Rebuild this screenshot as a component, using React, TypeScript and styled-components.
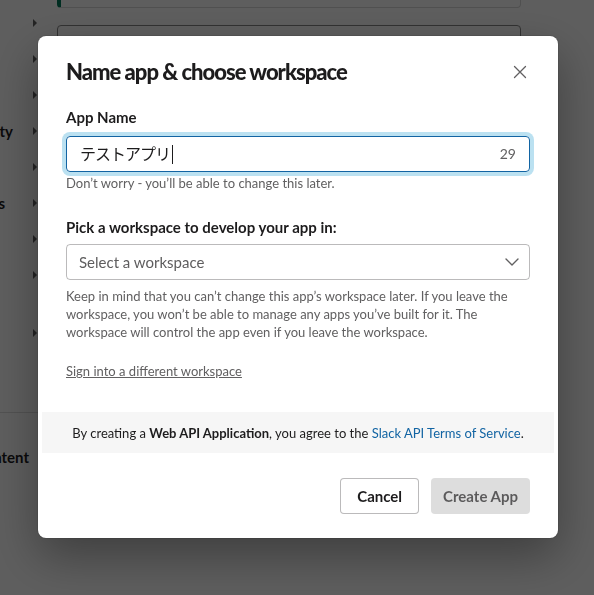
import React from "react";
import styled, { createGlobalStyle } from "styled-components";

const GlobalStyle = createGlobalStyle`
  html, body { margin: 0; padding: 0; }
  body {
    background: #ffffff;
    font-family: Lato, "Noto Sans CJK JP", sans-serif;
    overflow: hidden;
    color: #1d1c1d;
  }
  * { box-sizing: border-box; }
`;

const Page = styled.div`
  display: flex;
  width: 594px;
  height: 595px;
  overflow: hidden;
`;

const Sidebar = styled.nav`
  width: 44px;
  flex-shrink: 0;
  padding-top: 5px;
  display: flex;
  flex-direction: column;
  overflow: hidden;
`;

const NavRow = styled.div<{ $top?: number }>`
  height: 36px;
  flex-shrink: 0;
  display: flex;
  align-items: center;
  justify-content: flex-end;
  padding-right: 7px;
  margin-top: ${(p) => p.$top ?? 0}px;
`;

const NavLabel = styled.span<{ $gap: number }>`
  white-space: nowrap;
  font: 700 15px/22px Lato, sans-serif;
  color: #1d1c1d;
  margin-right: ${(p) => p.$gap}px;
`;

const Arrow = styled.span`
  width: 0;
  height: 0;
  border-top: 4px solid transparent;
  border-bottom: 4px solid transparent;
  border-left: 4px solid #616061;
`;

const Divider = styled.hr`
  width: 100%;
  margin: 61px 0 0;
  border: none;
  border-top: 1px solid #dddddd;
`;

const Content = styled.main`
  margin-left: 13px;
  width: 464px;
  display: flex;
  flex-direction: column;
`;

const TopCard = styled.div`
  height: 8px;
  border: 1px solid #d8d8d8;
  border-top: none;
  border-left: 4px solid #007a5a;
  border-radius: 0 0 4px 4px;
`;

const SearchBox = styled.div`
  margin-top: 17px;
  height: 120px;
  border: 1px solid #888888;
  border-radius: 4px;
`;

const Overlay = styled.div`
  position: fixed;
  inset: 0;
  background: rgba(0, 0, 0, 0.63);
  display: flex;
  align-items: flex-start;
  padding: 36px 0 0 38px;
`;

const Modal = styled.div`
  width: 520px;
  background: #ffffff;
  border-radius: 8px;
  box-shadow: 0 0 0 1px rgba(29, 28, 29, 0.13), 0 18px 48px 0 rgba(0, 0, 0, 0.35);
  display: flex;
  flex-direction: column;
`;

const Header = styled.header`
  display: flex;
  align-items: center;
  justify-content: space-between;
  padding: 22px 20px 0 28px;
  height: 50px;
`;

const Title = styled.h1`
  margin: 0;
  font: 900 22px/28px Lato, sans-serif;
  color: #1d1c1d;
  letter-spacing: -1px;
`;

const CloseButton = styled.button`
  width: 36px;
  height: 36px;
  margin: -4px 0;
  border: none;
  background: transparent;
  display: flex;
  align-items: center;
  justify-content: center;
  padding: 0;
  color: #616061;
`;

const Body = styled.div`
  padding: 20px 28px 32px;
  display: flex;
  flex-direction: column;
`;

const Label = styled.label<{ $top?: number; $bottom: number }>`
  font: 700 15px/22px Lato, sans-serif;
  color: #1d1c1d;
  margin-top: ${(p) => p.$top ?? 0}px;
  margin-bottom: ${(p) => p.$bottom}px;
`;

const TextField = styled.div`
  height: 36px;
  border: 1px solid #1264a3;
  border-radius: 4px;
  box-shadow: 0 0 0 4px rgba(29, 155, 209, 0.3);
  display: flex;
  align-items: center;
  padding: 0 13px;
`;

const FieldValue = styled.span`
  font: 400 16px/22px Lato, "Noto Sans CJK JP", sans-serif;
  letter-spacing: -1px;
  color: #1d1c1d;
`;

const Caret = styled.span`
  width: 1px;
  height: 19px;
  background: #1d1c1d;
  margin-left: 2px;
`;

const Counter = styled.span`
  margin-left: auto;
  font: 400 14px/22px Lato, sans-serif;
  color: #616061;
`;

const Hint = styled.p<{ $top: number }>`
  margin: ${(p) => p.$top}px 0 0;
  font: 400 13px/18px Lato, sans-serif;
  color: #616061;
`;

const Select = styled.div`
  height: 36px;
  border: 1px solid rgba(29, 28, 29, 0.3);
  border-radius: 4px;
  display: flex;
  align-items: center;
  justify-content: space-between;
  padding: 0 10px 0 12px;
`;

const Placeholder = styled.span`
  font: 400 15px/22px Lato, sans-serif;
  color: #5e5d5e;
`;

const SignLink = styled.a`
  margin-top: 21px;
  align-self: flex-start;
  font: 400 13px/18px Lato, sans-serif;
  color: #616061;
  text-decoration: underline;
`;

const Notice = styled.div`
  margin: 0 4px;
  height: 41px;
  padding-top: 12px;
  background: #f6f6f6;
  text-align: center;
  font: 400 13px/18px Lato, sans-serif;
  color: #1d1c1d;
`;

const Strong = styled.b`
  font-weight: 700;
`;

const TermsLink = styled.a`
  color: #1264a3;
  text-decoration: none;
`;

const Footer = styled.footer`
  display: flex;
  justify-content: flex-end;
  gap: 12px;
  padding: 25px 28px 24px;
`;

const Button = styled.button<{ $primary?: boolean }>`
  height: 36px;
  padding: ${(p) => (p.$primary ? "0 12px" : "0 16px")};
  border-radius: 4px;
  font: 700 15px/22px Lato, sans-serif;
  border: ${(p) => (p.$primary ? "none" : "1px solid rgba(29, 28, 29, 0.3)")};
  background: ${(p) => (p.$primary ? "#dddddd" : "#ffffff")};
  color: ${(p) => (p.$primary ? "rgba(29, 28, 29, 0.68)" : "#1d1c1d")};
`;

const navItems: { label: string; gap: number }[] = [
  { label: "", gap: 0 },
  { label: "", gap: 0 },
  { label: "", gap: 0 },
  { label: "Interactivity", gap: 20 },
  { label: "", gap: 0 },
  { label: "Slash Commands", gap: 28 },
  { label: "", gap: 0 },
  { label: "", gap: 0 },
];

export default function App() {
  return (
    <>
      <GlobalStyle />
      <Page>
        <Sidebar>
          {navItems.map((item, i) => (
            <NavRow key={i}>
              {item.label && <NavLabel $gap={item.gap}>{item.label}</NavLabel>}
              <Arrow />
            </NavRow>
          ))}
          <NavRow $top={22}>
            <Arrow />
          </NavRow>
          <Divider />
          <NavRow $top={26}>
            <NavLabel $gap={8}>Content</NavLabel>
          </NavRow>
        </Sidebar>
        <Content>
          <TopCard />
          <SearchBox />
        </Content>
      </Page>
      <Overlay>
        <Modal>
          <Header>
            <Title>Name app &amp; choose workspace</Title>
            <CloseButton aria-label="Close">
              <svg width="14" height="14" viewBox="0 0 14 14" fill="none">
                <path d="M1.5 1.5L12.5 12.5M12.5 1.5L1.5 12.5" stroke="currentColor" strokeWidth="1.3" strokeLinecap="round" />
              </svg>
            </CloseButton>
          </Header>
          <Body>
            <Label $bottom={8}>App Name</Label>
            <TextField>
              <FieldValue>テストアプリ</FieldValue>
              <Caret />
              <Counter>29</Counter>
            </TextField>
            <Hint $top={2}>Don’t worry - you’ll be able to change this later.</Hint>
            <Label $top={24} $bottom={6}>
              Pick a workspace to develop your app in:
            </Label>
            <Select>
              <Placeholder>Select a workspace</Placeholder>
              <svg width="14" height="8" viewBox="0 0 14 8" fill="none">
                <path d="M1 1L7 7L13 1" stroke="#616061" strokeWidth="1.4" strokeLinecap="round" strokeLinejoin="round" />
              </svg>
            </Select>
            <Hint $top={7}>
              Keep in mind that you can’t change this app’s workspace later. If you leave the workspace, you won’t be able
              to manage any apps you’ve built for it. The workspace will control the app even if you leave the
              workspace.
            </Hint>
            <SignLink href="#">Sign into a different workspace</SignLink>
          </Body>
          <Notice>
            By creating a <Strong>Web API Application</Strong>, you agree to the{" "}
            <TermsLink href="#">Slack API Terms of Service</TermsLink>.
          </Notice>
          <Footer>
            <Button>Cancel</Button>
            <Button $primary>Create App</Button>
          </Footer>
        </Modal>
      </Overlay>
    </>
  );
}
